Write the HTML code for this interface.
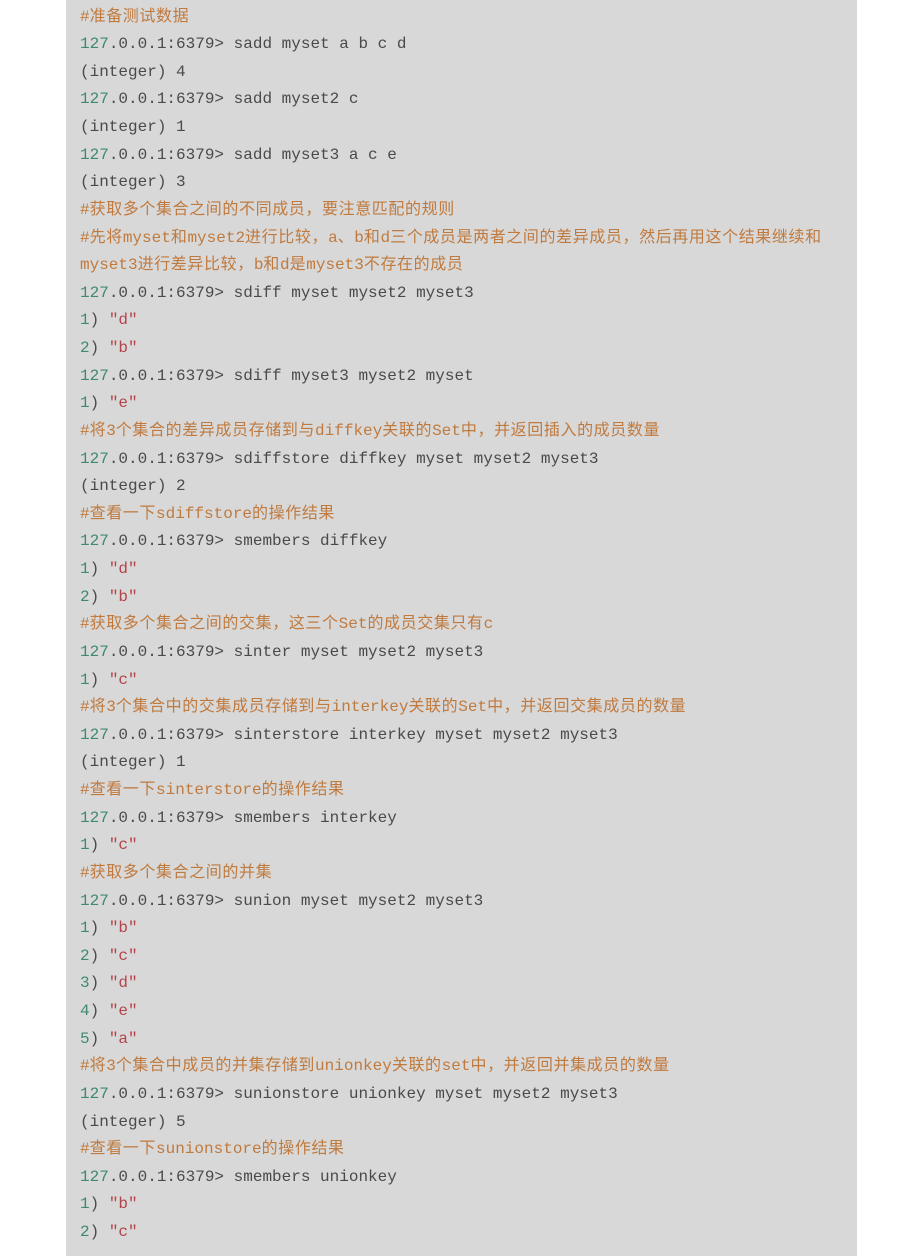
<!DOCTYPE html>
<html><head><meta charset="utf-8"><style>
html,body{margin:0;padding:0;background:#fff;width:902px;height:1256px;overflow:hidden}
.box{position:absolute;left:66px;top:0;width:791px;height:1256px;background:#d8d8d8}
pre{margin:0;padding:3.5px 0 0 14px;font-family:"Liberation Mono","Noto Sans CJK SC",monospace;font-size:16px;line-height:27.62px;color:#4a4a4a;white-space:pre}
.c{color:#c07a3e}.n{color:#3f8a6e}.s{color:#b5434a}
i{font-style:normal;letter-spacing:0.6px}
</style></head><body><div class="box"><pre><span class="c">#<i>准备测试数据</i></span>
<span class="n">127</span>.0.0.1:6379&gt; sadd myset a b c d
(integer) 4
<span class="n">127</span>.0.0.1:6379&gt; sadd myset2 c
(integer) 1
<span class="n">127</span>.0.0.1:6379&gt; sadd myset3 a c e
(integer) 3
<span class="c">#<i>获取多个集合之间的不同成员，要注意匹配的规则</i></span>
<span class="c">#<i>先将</i>myset<i>和</i>myset2<i>进行比较，</i>a<i>、</i>b<i>和</i>d<i>三个成员是两者之间的差异成员，然后再用这个结果继续和</i></span>
<span class="c">myset3<i>进行差异比较，</i>b<i>和</i>d<i>是</i>myset3<i>不存在的成员</i></span>
<span class="n">127</span>.0.0.1:6379&gt; sdiff myset myset2 myset3
<span class="n">1</span>) <span class="s">"d"</span>
<span class="n">2</span>) <span class="s">"b"</span>
<span class="n">127</span>.0.0.1:6379&gt; sdiff myset3 myset2 myset
<span class="n">1</span>) <span class="s">"e"</span>
<span class="c">#<i>将</i>3<i>个集合的差异成员存储到与</i>diffkey<i>关联的</i>Set<i>中，并返回插入的成员数量</i></span>
<span class="n">127</span>.0.0.1:6379&gt; sdiffstore diffkey myset myset2 myset3
(integer) 2
<span class="c">#<i>查看一下</i>sdiffstore<i>的操作结果</i></span>
<span class="n">127</span>.0.0.1:6379&gt; smembers diffkey
<span class="n">1</span>) <span class="s">"d"</span>
<span class="n">2</span>) <span class="s">"b"</span>
<span class="c">#<i>获取多个集合之间的交集，这三个</i>Set<i>的成员交集只有</i>c</span>
<span class="n">127</span>.0.0.1:6379&gt; sinter myset myset2 myset3
<span class="n">1</span>) <span class="s">"c"</span>
<span class="c">#<i>将</i>3<i>个集合中的交集成员存储到与</i>interkey<i>关联的</i>Set<i>中，并返回交集成员的数量</i></span>
<span class="n">127</span>.0.0.1:6379&gt; sinterstore interkey myset myset2 myset3
(integer) 1
<span class="c">#<i>查看一下</i>sinterstore<i>的操作结果</i></span>
<span class="n">127</span>.0.0.1:6379&gt; smembers interkey
<span class="n">1</span>) <span class="s">"c"</span>
<span class="c">#<i>获取多个集合之间的并集</i></span>
<span class="n">127</span>.0.0.1:6379&gt; sunion myset myset2 myset3
<span class="n">1</span>) <span class="s">"b"</span>
<span class="n">2</span>) <span class="s">"c"</span>
<span class="n">3</span>) <span class="s">"d"</span>
<span class="n">4</span>) <span class="s">"e"</span>
<span class="n">5</span>) <span class="s">"a"</span>
<span class="c">#<i>将</i>3<i>个集合中成员的并集存储到</i>unionkey<i>关联的</i>set<i>中，并返回并集成员的数量</i></span>
<span class="n">127</span>.0.0.1:6379&gt; sunionstore unionkey myset myset2 myset3
(integer) 5
<span class="c">#<i>查看一下</i>sunionstore<i>的操作结果</i></span>
<span class="n">127</span>.0.0.1:6379&gt; smembers unionkey
<span class="n">1</span>) <span class="s">"b"</span>
<span class="n">2</span>) <span class="s">"c"</span></pre></div></body></html>
